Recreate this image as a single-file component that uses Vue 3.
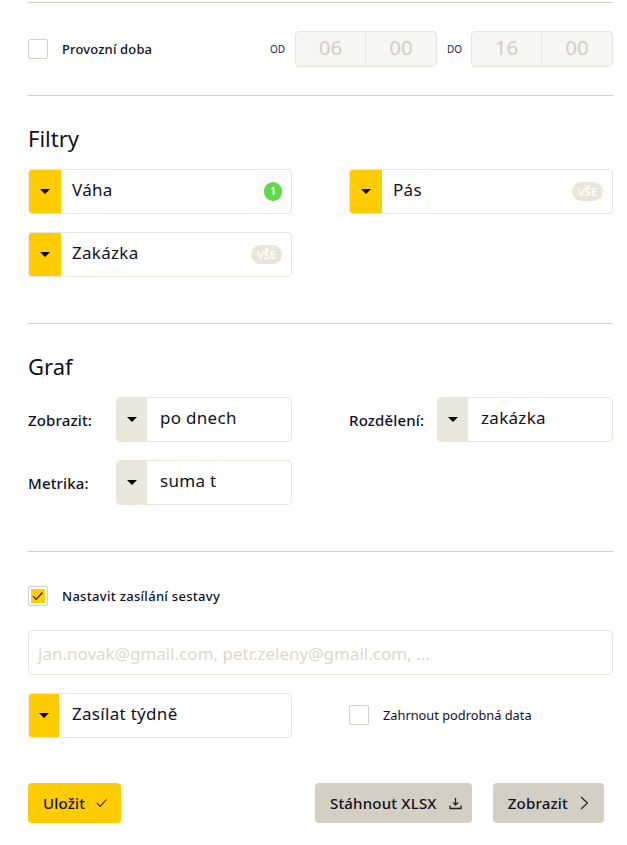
<script setup>
const Check = 'M1 5.2 L4.2 8.4 L10.5 1.5'
</script>

<template>
  <main class="page">
    <hr class="rule first" />
    <section class="hours">
      <label class="check"><span class="box"></span><b class="bold-label">Provozní doba</b></label>
      <div class="times">
        <span class="tag">OD</span>
        <div class="time"><span>06</span><span>00</span></div>
        <span class="tag do">DO</span>
        <div class="time"><span>16</span><span>00</span></div>
      </div>
    </section>
    <hr class="rule" />

    <h2 class="title filtry">Filtry</h2>
    <div class="grid filters">
      <div class="select"><span class="arrow yellow"><i></i></span><span class="value">Váha</span><span class="badge green">1</span></div>
      <div class="select"><span class="arrow yellow"><i></i></span><span class="value">Pás</span><span class="badge all">VŠE</span></div>
      <div class="select"><span class="arrow yellow"><i></i></span><span class="value">Zakázka</span><span class="badge all">VŠE</span></div>
    </div>
    <hr class="rule" />

    <h2 class="title graf">Graf</h2>
    <div class="grid graphs">
      <div class="field"><b class="flabel">Zobrazit:</b><div class="select grow"><span class="arrow grey"><i></i></span><span class="value">po dnech</span></div></div>
      <div class="field"><b class="flabel">Rozdělení:</b><div class="select grow"><span class="arrow grey"><i></i></span><span class="value">zakázka</span></div></div>
      <div class="field"><b class="flabel">Metrika:</b><div class="select grow"><span class="arrow grey"><i></i></span><span class="value">suma t</span></div></div>
    </div>
    <hr class="rule" />

    <label class="check report">
      <span class="box on"><svg width="12" height="10" viewBox="0 0 12 10"><path :d="Check" fill="none" stroke="#1a1a1a" stroke-width="1.2" /></svg></span>
      <b class="bold-label wide">Nastavit zasílání sestavy</b>
    </label>
    <div class="email">jan.novak@gmail.com, petr.zeleny@gmail.com, ...</div>
    <div class="grid send">
      <div class="select"><span class="arrow yellow narrow"><i></i></span><span class="value">Zasílat týdně</span></div>
      <label class="check detail"><span class="box"></span><span class="plain-label">Zahrnout podrobná data</span></label>
    </div>

    <div class="actions">
      <button class="btn primary">Uložit
        <svg width="12" height="10" viewBox="0 0 12 10"><path :d="Check" fill="none" stroke="#222" stroke-width="1.1" /></svg>
      </button>
      <div class="right">
        <button class="btn xlsx">Stáhnout XLSX
          <svg width="13" height="13" viewBox="0 0 13 13" fill="none" stroke="#222" stroke-width="1.3"><path d="M6.5 1 V8 M3.8 5.4 L6.5 8.1 L9.2 5.4 M1 8.5 V11.5 H12 V8.5" /></svg>
        </button>
        <button class="btn show">Zobrazit
          <svg width="9" height="14" viewBox="0 0 9 14" fill="none" stroke="#222" stroke-width="1.2"><path d="M1 1 L7.5 7 L1 13" /></svg>
        </button>
      </div>
    </div>
  </main>
</template>

<style>
html, body { margin: 0; background: #fff; }
</style>

<style scoped>
.page {
  box-sizing: border-box;
  width: 627px;
  height: 845px;
  padding: 2px 14px 0 28px;
  overflow: hidden;
  font-family: "Noto Sans", "Open Sans", sans-serif;
  color: #10101f;
}
.rule { border: 0; height: 1px; margin: 0; background: #d3d0c3; }
.hours { display: flex; align-items: center; justify-content: space-between; height: 92px; box-sizing: border-box; }
.check { display: flex; align-items: center; gap: 14px; }
.box {
  box-sizing: border-box; flex: none; width: 20px; height: 20px;
  border: 1px solid #d3d0c3; border-radius: 2px; background: #fff;
  display: flex; align-items: center; justify-content: center;
}
.box.on { background: #ffcc00; box-shadow: inset 0 0 0 2px #fff; }
.bold-label { font-size: 13px; font-weight: 500; letter-spacing: 0.15px; }
.bold-label.wide { letter-spacing: 0.3px; }
.plain-label { font-size: 12.8px; }
.times { display: flex; align-items: center; }
.tag { width: 25px; font-size: 10px; color: #1a1f5c; }
.tag.do { width: 24px; margin-left: 10px; }
.time {
  box-sizing: border-box; width: 142px; height: 36px; display: grid; grid-template-columns: 70px 1fr;
  background: #f6f6f2; border: 1px solid #e9e6da; border-radius: 4px;
  font-size: 20.5px; color: #d3d0c3; text-align: center; line-height: 31px;
}
.time span:first-child { border-right: 1px solid #e9e6da; }
.title { margin: 0; font-size: 22px; font-weight: 400; line-height: 28px; }
.filtry { padding-top: 28px; }
.graf { padding-top: 28px; }
.grid { display: grid; grid-template-columns: 264px 264px; column-gap: 57px; row-gap: 18px; }
.filters { margin-top: 17px; padding-bottom: 46px; }
.graphs { margin-top: 17px; padding-bottom: 46px; }
.select {
  box-sizing: border-box; height: 45px; display: flex; align-items: center;
  border: 1px solid #e9e6da; border-radius: 4px; background: #fff; overflow: hidden;
}
.arrow { flex: none; align-self: stretch; width: 32px; margin: -1px 0 -1px -1px; display: flex; align-items: center; justify-content: center; }
.arrow.yellow { width: 33px; }
.arrow.grey { width: 31px; }
.arrow.narrow { width: 31px; }
.arrow i { width: 0; height: 0; border: 5px solid transparent; border-top: 5px solid #000; border-bottom: 0; }
.yellow { background: #ffcc00; }
.grey { background: #e9e6da; }
.value { flex: 1; padding-left: 11px; font-size: 17px; letter-spacing: 0.3px; line-height: 40px; margin-top: -4px; }
.narrow + .value { padding-left: 13px; }
.grey + .value { padding-left: 13px; }
.badge { flex: none; margin-right: 9px; border-radius: 10px; height: 19px; line-height: 19px; text-align: center; font-size: 10px; font-weight: 600; color: #fff; }
.green { width: 18px; background: #5fd84a; }
.all { width: 31px; background: #e9e6da; font-size: 11px; }
.field { display: flex; align-items: center; }
.flabel { flex: none; width: 88px; font-size: 15px; font-weight: 500; letter-spacing: 0.15px; }
.grow { flex: 1; }
.report { margin-top: 34px; }
.email {
  box-sizing: border-box; height: 45px; margin-top: 24px; padding-left: 9px;
  border: 1px solid #e9e6da; border-radius: 4px;
  font-size: 17px; line-height: 45px; color: #dcd8c9; white-space: nowrap; overflow: hidden;
}
.send { margin-top: 18px; }
.detail { gap: 14px; padding-bottom: 1px; }
.actions { display: flex; justify-content: space-between; margin-top: 45px; padding-right: 9px; }
.right { display: flex; gap: 21px; }
.btn {
  box-sizing: border-box; height: 40px; padding: 0 13px 0 15px; border: 0; border-radius: 4px;
  display: flex; align-items: center; gap: 11px;
  background: #d3d0c3; color: #10101f;
  font: 500 15px "Noto Sans", "Open Sans", sans-serif;
  letter-spacing: 0.2px;
}
.primary { background: #ffcc00; }
.xlsx { padding-right: 10px; gap: 12px; }
.show { padding-right: 15px; gap: 12px; }
</style>
